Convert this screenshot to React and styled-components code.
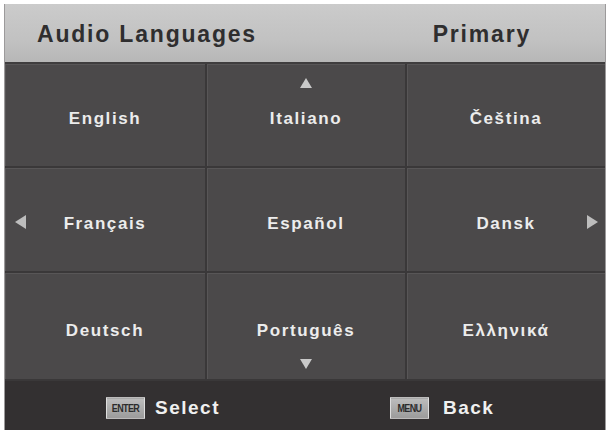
import React from "react";
import styled, { createGlobalStyle } from "styled-components";

const GlobalStyle = createGlobalStyle`
  html, body {
    margin: 0;
    padding: 0;
    background: #ffffff;
  }
  body {
    font-family: "Liberation Sans", Arial, sans-serif;
  }
`;

const Screen = styled.div`
  width: 609px;
  height: 435px;
  overflow: hidden;
  background: #ffffff;
  padding-top: 4px;
  box-sizing: border-box;
`;

const Panel = styled.div`
  margin-left: 4px;
  width: 602px;
  border-left: 1px solid #9c9a9b;
  border-right: 1px solid #9c9a9b;
  box-sizing: border-box;
  display: flex;
  flex-direction: column;
`;

const Header = styled.div`
  height: 60px;
  display: flex;
  align-items: center;
  justify-content: space-between;
  padding: 3px 74px 0 32px;
  background: linear-gradient(#cbcbcb, #c2c2c2 60%, #b7b7b7);
  border-bottom: 2px solid #3f3d3e;
  box-sizing: border-box;
`;

const HeaderText = styled.span`
  font-size: 23px;
  font-weight: bold;
  letter-spacing: 1.8px;
  color: #2f2e2f;
`;

const Grid = styled.div`
  display: grid;
  grid-template-columns: 202px 200px 1fr;
  grid-template-rows: 104px 105px 108px;
  background: #3a3839;
`;

const Cell = styled.div`
  position: relative;
  display: flex;
  align-items: center;
  justify-content: center;
  background: #4b494a;
  border-right: ${(p) => (p.last ? "none" : "2px solid #3a3839")};
  border-bottom: 2px solid #3a3839;
  box-shadow: inset 1px 1px 0 #585657;
  padding-top: ${(p) => p.shift}px;
  box-sizing: border-box;
`;

const Label = styled.span`
  font-size: 17px;
  font-weight: bold;
  letter-spacing: 1.6px;
  color: #ececec;
`;

// little scroll markers drawn with css borders
const Arrow = styled.span`
  position: absolute;
  width: 0;
  height: 0;
  ${(p) =>
    p.dir === "up" &&
    `top: 14px; left: 50%; margin-left: -6px;
     border-left: 6px solid transparent; border-right: 6px solid transparent;
     border-bottom: 10px solid #c9c9c9;`}
  ${(p) =>
    p.dir === "down" &&
    `bottom: 10px; left: 50%; margin-left: -6px;
     border-left: 6px solid transparent; border-right: 6px solid transparent;
     border-top: 10px solid #c9c9c9;`}
  ${(p) =>
    p.dir === "left" &&
    `left: 10px; top: 50%; margin-top: -5px;
     border-top: 7px solid transparent; border-bottom: 7px solid transparent;
     border-right: 11px solid #bdbdbd;`}
  ${(p) =>
    p.dir === "right" &&
    `right: 7px; top: 50%; margin-top: -5px;
     border-top: 7px solid transparent; border-bottom: 7px solid transparent;
     border-left: 11px solid #bdbdbd;`}
`;

const Footer = styled.div`
  height: 49px;
  display: flex;
  align-items: center;
  padding: 4px 0 0 101px;
  background: #333031;
  box-sizing: border-box;
`;

const Hint = styled.div`
  display: flex;
  align-items: center;
  gap: ${(p) => p.gap}px;
  margin-right: ${(p) => p.after || 0}px;
`;

const KeyCap = styled.span`
  width: 37px;
  height: 16px;
  display: flex;
  align-items: center;
  justify-content: center;
  background: linear-gradient(#bdbdbd, #9c9c9c);
  border: 1px solid #dedede;
  font-size: 9px;
  font-weight: bold;
  letter-spacing: -0.6px;
  color: #2b2b2b;
  transform: scaleY(1.2);
`;

const HintText = styled.span`
  font-size: 19px;
  font-weight: bold;
  letter-spacing: 1.5px;
  color: #f0f0f0;
`;

const languages = [
  ["English", "Italiano", "Čeština"],
  ["Français", "Español", "Dansk"],
  ["Deutsch", "Português", "Ελληνικά"],
];

const arrowFor = (row, col) => {
  if (row === 0 && col === 1) return "up";
  if (row === 2 && col === 1) return "down";
  if (row === 1 && col === 0) return "left";
  if (row === 1 && col === 2) return "right";
  return null;
};

const App = () => {
  return (
    <Screen>
      <GlobalStyle />
      <Panel>
        <Header>
          <HeaderText>Audio Languages</HeaderText>
          <HeaderText>Primary</HeaderText>
        </Header>
        <Grid>
          {languages.map((row, r) =>
            row.map((name, c) => {
              const dir = arrowFor(r, c);
              return (
                <Cell key={name} last={c === 2} shift={r === 2 ? 10 : 8}>
                  {dir && <Arrow dir={dir} />}
                  <Label>{name}</Label>
                </Cell>
              );
            })
          )}
        </Grid>
        <Footer>
          <Hint gap={10} after={170}>
            <KeyCap>ENTER</KeyCap>
            <HintText>Select</HintText>
          </Hint>
          <Hint gap={14}>
            <KeyCap>MENU</KeyCap>
            <HintText>Back</HintText>
          </Hint>
        </Footer>
      </Panel>
    </Screen>
  );
};

export default App;
